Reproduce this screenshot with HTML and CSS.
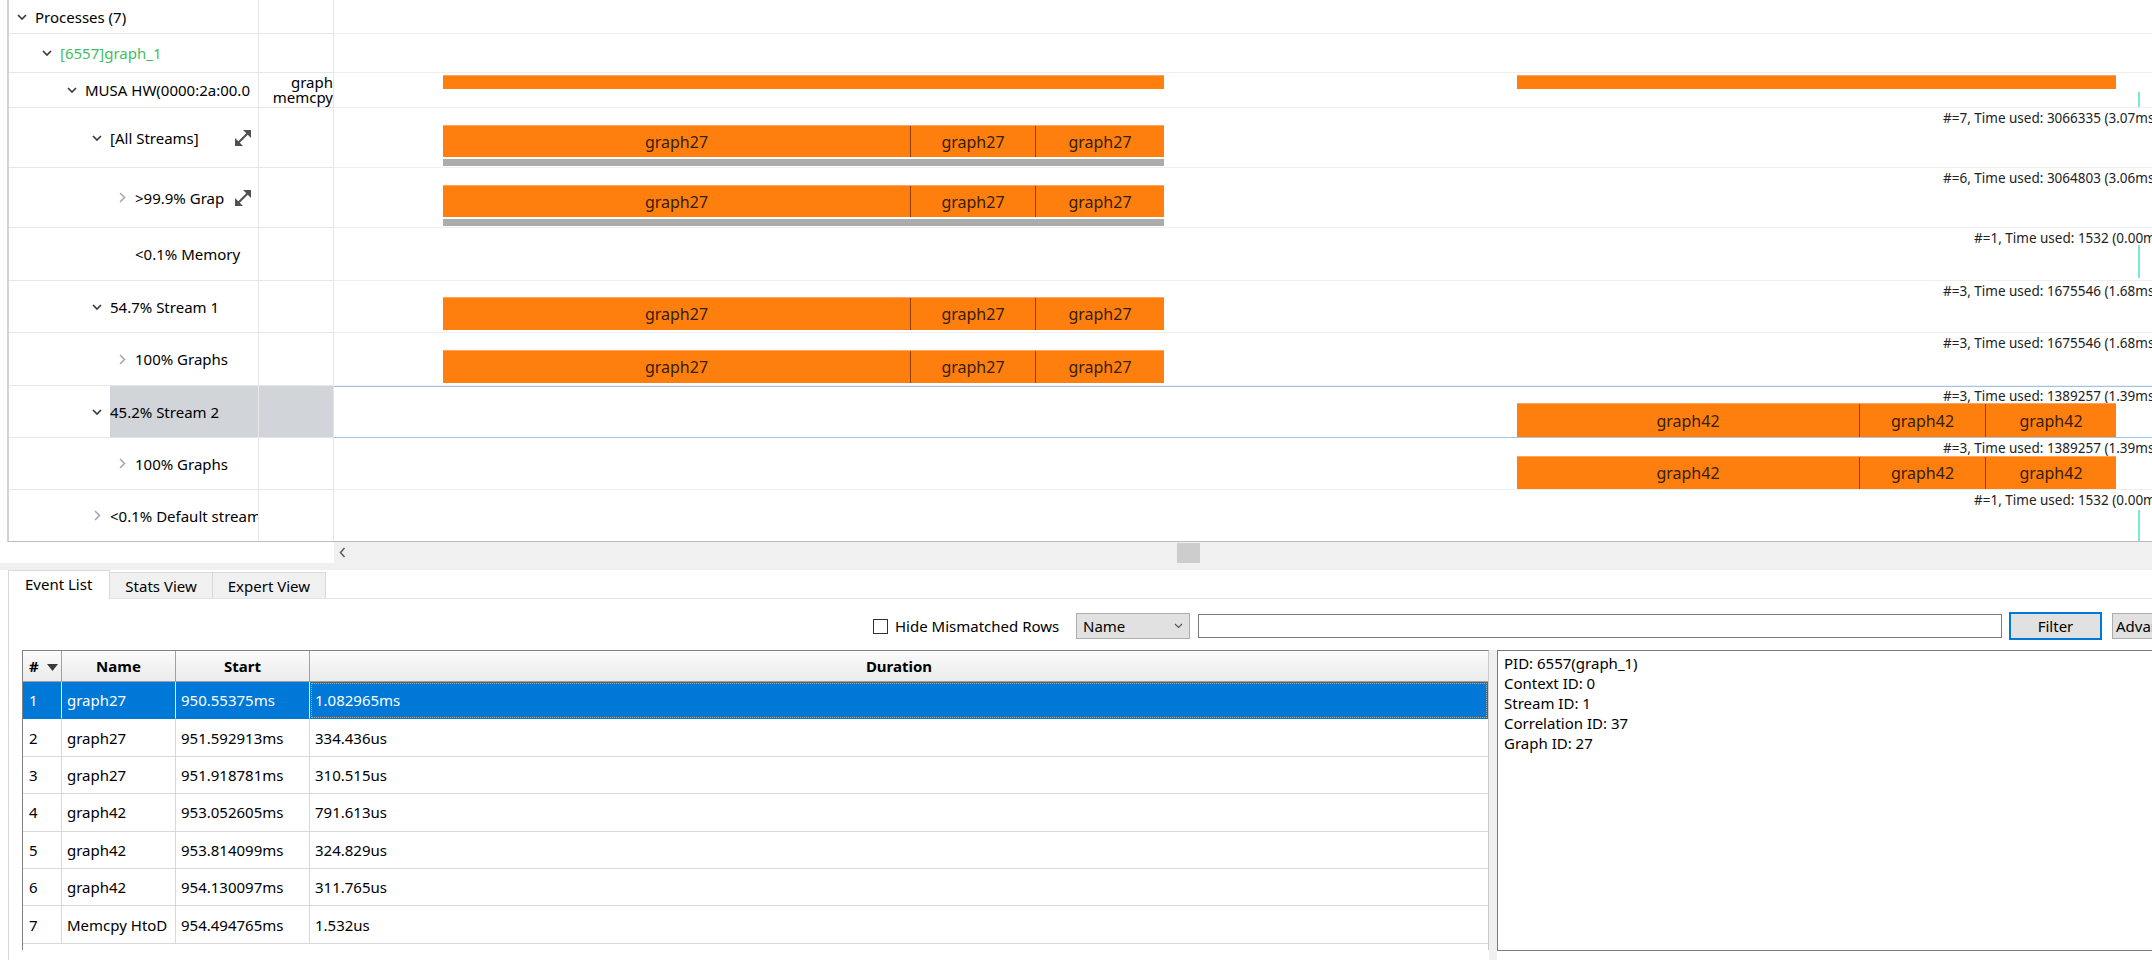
FILE: index.html
```html
<!DOCTYPE html>
<html>
  <head>
    <title>Timeline</title>
    <link rel="stylesheet" href="styles.css">
  </head>
  <body>
    <div class="tracks">
      <div class="trow h34">
        <div class="name lv0">
          <span class="twisty"><svg width="10" height="6" viewBox="0 0 10 6"><polyline points="1,1 5,5 9,1" class="down"/></svg></span>
          <span class="label">Processes (7)</span>
        </div>
        <div class="col2"></div>
        <div class="lane"></div>
      </div>
      <div class="trow h39">
        <div class="name lv1">
          <span class="twisty"><svg width="10" height="6" viewBox="0 0 10 6"><polyline points="1,1 5,5 9,1" class="down"/></svg></span>
          <span class="label green">[6557]graph_1</span>
        </div>
        <div class="col2"></div>
        <div class="lane"></div>
      </div>
      <div class="trow h35">
        <div class="name lv2">
          <span class="twisty"><svg width="10" height="6" viewBox="0 0 10 6"><polyline points="1,1 5,5 9,1" class="down"/></svg></span>
          <span class="label">MUSA HW(0000:2a:00.0</span>
        </div>
        <div class="col2 kinds"><span>graph</span><span>memcpy</span></div>
        <div class="lane">
          <div class="bar" style="left:109px;top:2px;width:721px;height:14px"></div>
          <div class="bar" style="left:1183px;top:2px;width:599px;height:14px"></div>
          <div class="mark" style="top:19px;height:16px"></div>
        </div>
      </div>
      <div class="trow h60">
        <div class="name lv3">
          <span class="twisty"><svg width="10" height="6" viewBox="0 0 10 6"><polyline points="1,1 5,5 9,1" class="down"/></svg></span>
          <span class="label">[All Streams]</span>
          <svg class="expand" width="18" height="18" viewBox="0 0 18 18"><line x1="4" y1="14" x2="14" y2="4"/><polygon points="9,1 17,1 17,9"/><polygon points="1,9 1,17 9,17"/></svg>
        </div>
        <div class="col2"></div>
        <div class="lane">
          <div class="used" style="left:1609px">#=7, Time used: 3066335 (3.07ms)</div>
          <div class="bar" style="left:109px;top:17px;width:721px;height:32px">
            <div class="seg" style="width:467px">graph27</div>
            <div class="seg" style="width:125px">graph27</div>
            <div class="seg" style="width:129px">graph27</div>
          </div>
          <div class="under" style="left:109px;top:51px;width:721px"></div>
        </div>
      </div>
      <div class="trow h60">
        <div class="name lv4">
          <span class="twisty"><svg width="7" height="11" viewBox="0 0 7 11"><polyline points="1,1 5.5,5.5 1,10" class="right"/></svg></span>
          <span class="label">&gt;99.9% Graphs</span>
          <svg class="expand" width="18" height="18" viewBox="0 0 18 18"><line x1="4" y1="14" x2="14" y2="4"/><polygon points="9,1 17,1 17,9"/><polygon points="1,9 1,17 9,17"/></svg>
        </div>
        <div class="col2"></div>
        <div class="lane">
          <div class="used" style="left:1609px">#=6, Time used: 3064803 (3.06ms)</div>
          <div class="bar" style="left:109px;top:17px;width:721px;height:32px">
            <div class="seg" style="width:467px">graph27</div>
            <div class="seg" style="width:125px">graph27</div>
            <div class="seg" style="width:129px">graph27</div>
          </div>
          <div class="under" style="left:109px;top:51px;width:721px"></div>
        </div>
      </div>
      <div class="trow h53">
        <div class="name lv4">
          <span class="twisty"></span>
          <span class="label">&lt;0.1% Memory</span>
        </div>
        <div class="col2"></div>
        <div class="lane">
          <div class="used" style="left:1640px">#=1, Time used: 1532 (0.00ms)</div>
          <div class="mark" style="top:17px;height:33px"></div>
        </div>
      </div>
      <div class="trow h52">
        <div class="name lv3">
          <span class="twisty"><svg width="10" height="6" viewBox="0 0 10 6"><polyline points="1,1 5,5 9,1" class="down"/></svg></span>
          <span class="label">54.7% Stream 1</span>
        </div>
        <div class="col2"></div>
        <div class="lane">
          <div class="used" style="left:1609px">#=3, Time used: 1675546 (1.68ms)</div>
          <div class="bar" style="left:109px;top:16px;width:721px;height:33px">
            <div class="seg" style="width:467px">graph27</div>
            <div class="seg" style="width:125px">graph27</div>
            <div class="seg" style="width:129px">graph27</div>
          </div>
        </div>
      </div>
      <div class="trow h53">
        <div class="name lv4">
          <span class="twisty"><svg width="7" height="11" viewBox="0 0 7 11"><polyline points="1,1 5.5,5.5 1,10" class="right"/></svg></span>
          <span class="label">100% Graphs</span>
        </div>
        <div class="col2"></div>
        <div class="lane">
          <div class="used" style="left:1609px">#=3, Time used: 1675546 (1.68ms)</div>
          <div class="bar" style="left:109px;top:17px;width:721px;height:33px">
            <div class="seg" style="width:467px">graph27</div>
            <div class="seg" style="width:125px">graph27</div>
            <div class="seg" style="width:129px">graph27</div>
          </div>
        </div>
      </div>
      <div class="trow h52 selected">
        <div class="name lv3">
          <span class="twisty"><svg width="10" height="6" viewBox="0 0 10 6"><polyline points="1,1 5,5 9,1" class="down"/></svg></span>
          <span class="label">45.2% Stream 2</span>
        </div>
        <div class="col2"></div>
        <div class="lane">
          <div class="used" style="left:1609px">#=3, Time used: 1389257 (1.39ms)</div>
          <div class="bar" style="left:1183px;top:17px;width:599px;height:34px">
            <div class="seg" style="width:342px">graph42</div>
            <div class="seg" style="width:126px">graph42</div>
            <div class="seg" style="width:131px">graph42</div>
          </div>
        </div>
      </div>
      <div class="trow h52">
        <div class="name lv4">
          <span class="twisty"><svg width="7" height="11" viewBox="0 0 7 11"><polyline points="1,1 5.5,5.5 1,10" class="right"/></svg></span>
          <span class="label">100% Graphs</span>
        </div>
        <div class="col2"></div>
        <div class="lane">
          <div class="used" style="left:1609px">#=3, Time used: 1389257 (1.39ms)</div>
          <div class="bar" style="left:1183px;top:18px;width:599px;height:33px">
            <div class="seg" style="width:342px">graph42</div>
            <div class="seg" style="width:126px">graph42</div>
            <div class="seg" style="width:131px">graph42</div>
          </div>
        </div>
      </div>
      <div class="trow h51">
        <div class="name lv3">
          <span class="twisty"><svg width="7" height="11" viewBox="0 0 7 11"><polyline points="1,1 5.5,5.5 1,10" class="right"/></svg></span>
          <span class="label">&lt;0.1% Default stream</span>
        </div>
        <div class="col2"></div>
        <div class="lane">
          <div class="used" style="left:1640px">#=1, Time used: 1532 (0.00ms)</div>
          <div class="mark" style="top:20px;height:31px"></div>
        </div>
      </div>
    </div>

    <div class="hscroll-row">
      <div class="hscroll-gap"></div>
      <div class="hscroll">
        <svg class="arrow" width="7" height="11" viewBox="0 0 7 11"><polyline points="5.5,1 1.5,5.5 5.5,10"/></svg>
        <div class="thumb"></div>
      </div>
    </div>
    <div class="band"></div>

    <div class="tabs">
      <div class="tab active">Event List</div>
      <div class="tab">Stats View</div>
      <div class="tab">Expert View</div>
    </div>

    <div class="pane">
      <div class="filterbar">
        <span class="check"></span>
        <span class="check-label">Hide Mismatched Rows</span>
        <div class="combo">
          <span>Name</span>
          <svg width="9" height="6" viewBox="0 0 9 6"><polyline points="1,1 4.5,4.5 8,1"/></svg>
        </div>
        <div class="search"></div>
        <div class="btn filter">Filter</div>
        <div class="btn adv">Advanced...</div>
      </div>

      <div class="split">
        <div class="table-wrap">
          <table class="events">
            <thead>
              <tr>
                <th class="c-num">#<svg width="11" height="7" viewBox="0 0 11 7"><polygon points="0,0 11,0 5.5,7"/></svg></th>
                <th class="c-name">Name</th>
                <th class="c-start">Start</th>
                <th class="c-dur">Duration</th>
              </tr>
            </thead>
            <tbody>
              <tr class="sel"><td>1</td><td>graph27</td><td>950.55375ms</td><td class="focus">1.082965ms</td></tr>
              <tr><td>2</td><td>graph27</td><td>951.592913ms</td><td>334.436us</td></tr>
              <tr><td>3</td><td>graph27</td><td>951.918781ms</td><td>310.515us</td></tr>
              <tr><td>4</td><td>graph42</td><td>953.052605ms</td><td>791.613us</td></tr>
              <tr><td>5</td><td>graph42</td><td>953.814099ms</td><td>324.829us</td></tr>
              <tr><td>6</td><td>graph42</td><td>954.130097ms</td><td>311.765us</td></tr>
              <tr><td>7</td><td>Memcpy HtoD</td><td>954.494765ms</td><td>1.532us</td></tr>
            </tbody>
          </table>
        </div>
        <div class="splitter"></div>
        <div class="details">
          <div>PID: 6557(graph_1)</div>
          <div>Context ID: 0</div>
          <div>Stream ID: 1</div>
          <div>Correlation ID: 37</div>
          <div>Graph ID: 27</div>
        </div>
      </div>
    </div>
  </body>
</html>
```

FILE: styles.css
```css
* {
  box-sizing: border-box;
}

html,
body {
  margin: 0;
}

body {
  width: 2152px;
  height: 960px;
  overflow: hidden;
  background-color: #fff;
  font-family: "Noto Sans", "Liberation Sans", sans-serif;
  font-size: 15px;
  color: #000;
}

/* track tree + timeline */
.tracks {
  margin-left: 7px;
  border-left: 2px solid #d3d3d3;
  border-bottom: 1px solid #bcbcbc;
}

.trow {
  display: grid;
  grid-template-columns: 250px 75px 1fr;
}
.trow > div {
  border-bottom: 1px solid #e6e6e6;
}
.trow:last-child > div {
  border-bottom: none;
}
.h34 { height: 34px; }
.h35 { height: 35px; }
.h39 { height: 39px; }
.h51 { height: 51px; }
.h52 { height: 52px; }
.h53 { height: 53px; }
.h60 { height: 60px; }

.name {
  display: flex;
  border-right: 1px solid #e6e6e6;
  white-space: nowrap;
  overflow: hidden;
}
.lv0 { padding-left: 8px; }
.lv1 { padding-left: 33px; }
.lv2 { padding-left: 58px; }
.lv3 { padding-left: 83px; }
.lv4 { padding-left: 108px; }

.twisty {
  flex: none;
  width: 10px;
  margin-right: 8px;
  display: flex;
  align-items: center;
  justify-content: center;
}
.twisty .down {
  fill: none;
  stroke: #3c3c3c;
  stroke-width: 1.7;
}
.twisty .right {
  fill: none;
  stroke: #a9a9a9;
  stroke-width: 1.6;
}

.label {
  flex: 1;
  min-width: 0;
  display: flex;
  align-items: center;
  overflow: hidden;
}
.green {
  color: #3fbd62;
}

.expand {
  flex: none;
  align-self: center;
  margin: 0 6px 0 9px;
}
.expand line {
  stroke: #505050;
  stroke-width: 2.2;
}
.expand polygon {
  fill: #505050;
}

.col2 {
  border-right: 1px solid #e6e6e6;
}
.kinds {
  display: flex;
  flex-direction: column;
  justify-content: center;
  align-items: flex-end;
  line-height: 15px;
  overflow: hidden;
  white-space: nowrap;
}

.selected .label,
.selected .col2 {
  background-color: #d1d4d8;
}

.lane {
  position: relative;
  overflow: hidden;
}
.trow > .lane {
  border-bottom-color: #efefef;
}
.selected > .lane {
  border-bottom-color: #a3c3e3;
  box-shadow: inset 0 1px 0 #a3c3e3;
}

.bar {
  position: absolute;
  display: flex;
  background-color: #ff7f0e;
  border-top: 1px solid #ffa45c;
}
.seg {
  flex: none;
  display: flex;
  align-items: center;
  justify-content: center;
  font-size: 16px;
  color: #35200c;
}
.seg + .seg {
  border-left: 1px solid #8a4208;
}
.under {
  position: absolute;
  height: 7px;
  background-color: #acacac;
}
.mark {
  position: absolute;
  left: 1804px;
  width: 2px;
  background-color: #7de8d2;
}
.used {
  position: absolute;
  top: 2px;
  font-size: 13.5px;
  line-height: 16px;
  white-space: nowrap;
  color: #222;
}

/* horizontal scrollbar */
.hscroll-row {
  display: grid;
  grid-template-columns: 334px 1fr;
  height: 21px;
}
.hscroll {
  position: relative;
  background-color: #f0f0f0;
  display: flex;
  align-items: center;
}
.hscroll .arrow {
  margin-left: 5px;
}
.hscroll .arrow polyline {
  fill: none;
  stroke: #606060;
  stroke-width: 1.6;
}
.thumb {
  position: absolute;
  left: 843px;
  top: 1px;
  width: 23px;
  height: 20px;
  background-color: #cdcdcd;
}
.band {
  height: 7px;
  background-color: #f0f0f0;
}

/* tabs */
.tabs {
  display: flex;
  align-items: flex-end;
  height: 28px;
  padding-left: 8px;
}
.tab {
  height: 26px;
  padding: 0 15px;
  line-height: 26px;
  background-color: #f0f0f0;
  border: 1px solid #d9d9d9;
  border-bottom: none;
  margin-left: -1px;
}
.tab.active {
  height: 29px;
  margin-left: 0;
  margin-bottom: -1px;
  padding: 0 17px 0 16px;
  line-height: 26px;
  background-color: #fff;
  position: relative;
}

.pane {
  margin-left: 8px;
  border-left: 1px solid #d9d9d9;
  border-top: 1px solid #e3e3e3;
  padding: 13px 0 0 13px;
}

/* filter bar */
.filterbar {
  display: flex;
  align-items: center;
  height: 28px;
  padding-left: 851px;
  white-space: nowrap;
}
.filterbar > * {
  flex: none;
}
.check {
  width: 15px;
  height: 15px;
  border: 1px solid #333;
  background-color: #fff;
  margin-right: 7px;
}
.check-label {
  width: 168px;
  margin-right: 13px;
}
.combo {
  width: 114px;
  height: 26px;
  display: flex;
  align-items: center;
  justify-content: space-between;
  padding: 0 6px 0 6px;
  background-color: #e1e1e1;
  border: 1px solid #adadad;
}
.combo polyline {
  fill: none;
  stroke: #555;
  stroke-width: 1.1;
}
.search {
  width: 804px;
  height: 24px;
  margin-left: 8px;
  border: 1px solid #7a7a7a;
  background-color: #fff;
}
.btn {
  height: 26px;
  line-height: 24px;
  background-color: #e1e1e1;
  border: 1px solid #adadad;
}
.btn.filter {
  width: 93px;
  height: 28px;
  margin-left: 7px;
  text-align: center;
  border: 2px solid #0078d7;
}
.btn.adv {
  width: 100px;
  margin-left: 10px;
  padding-left: 3px;
}

/* table + details */
.split {
  display: flex;
  margin-top: 10px;
  height: 310px;
}
.table-wrap {
  flex: none;
  width: 1467px;
  height: 300px;
  border-left: 1px solid #828282;
  border-top: 1px solid #828282;
  border-right: 1px solid #c8c8c8;
  overflow: hidden;
}
.events {
  width: 100%;
  border-collapse: separate;
  border-spacing: 0;
  table-layout: fixed;
}
.events th {
  height: 31px;
  padding: 0;
  font-weight: bold;
  text-align: center;
  background: linear-gradient(#fbfbfb, #ebebeb);
  border-right: 1px solid #a0a0a0;
  border-bottom: 1px solid #a0a0a0;
}
.events th:last-child {
  border-right: none;
}
.events .c-num {
  width: 39px;
  text-align: left;
  padding-left: 6px;
}
.events .c-num svg {
  margin-left: 8px;
  vertical-align: 1px;
}
.events .c-num polygon {
  fill: #3a3a3a;
}
.events .c-name {
  width: 114px;
}
.events .c-start {
  width: 134px;
}
.events td {
  height: 37.4px;
  padding: 0 4px 0 5px;
  white-space: nowrap;
  overflow: hidden;
  border-right: 1px solid #d9d9d9;
  border-bottom: 1px solid #d9d9d9;
}
.events td:first-child {
  padding-left: 6px;
}
.events td:last-child {
  border-right: none;
}
.events .sel td {
  background-color: #0078d7;
  color: #fff;
  border-right-color: #e8f1fa;
  border-bottom-color: #0078d7;
}
.events .sel td.focus {
  outline: 1px dotted #d9a15c;
  outline-offset: -2px;
}

.splitter {
  flex: none;
  width: 8px;
  background-color: #f0f0f0;
}
.details {
  flex: 1;
  height: 301px;
  padding: 2px 6px;
  line-height: 20px;
  border: 1px solid #7a7a7a;
  border-right: none;
}
```
